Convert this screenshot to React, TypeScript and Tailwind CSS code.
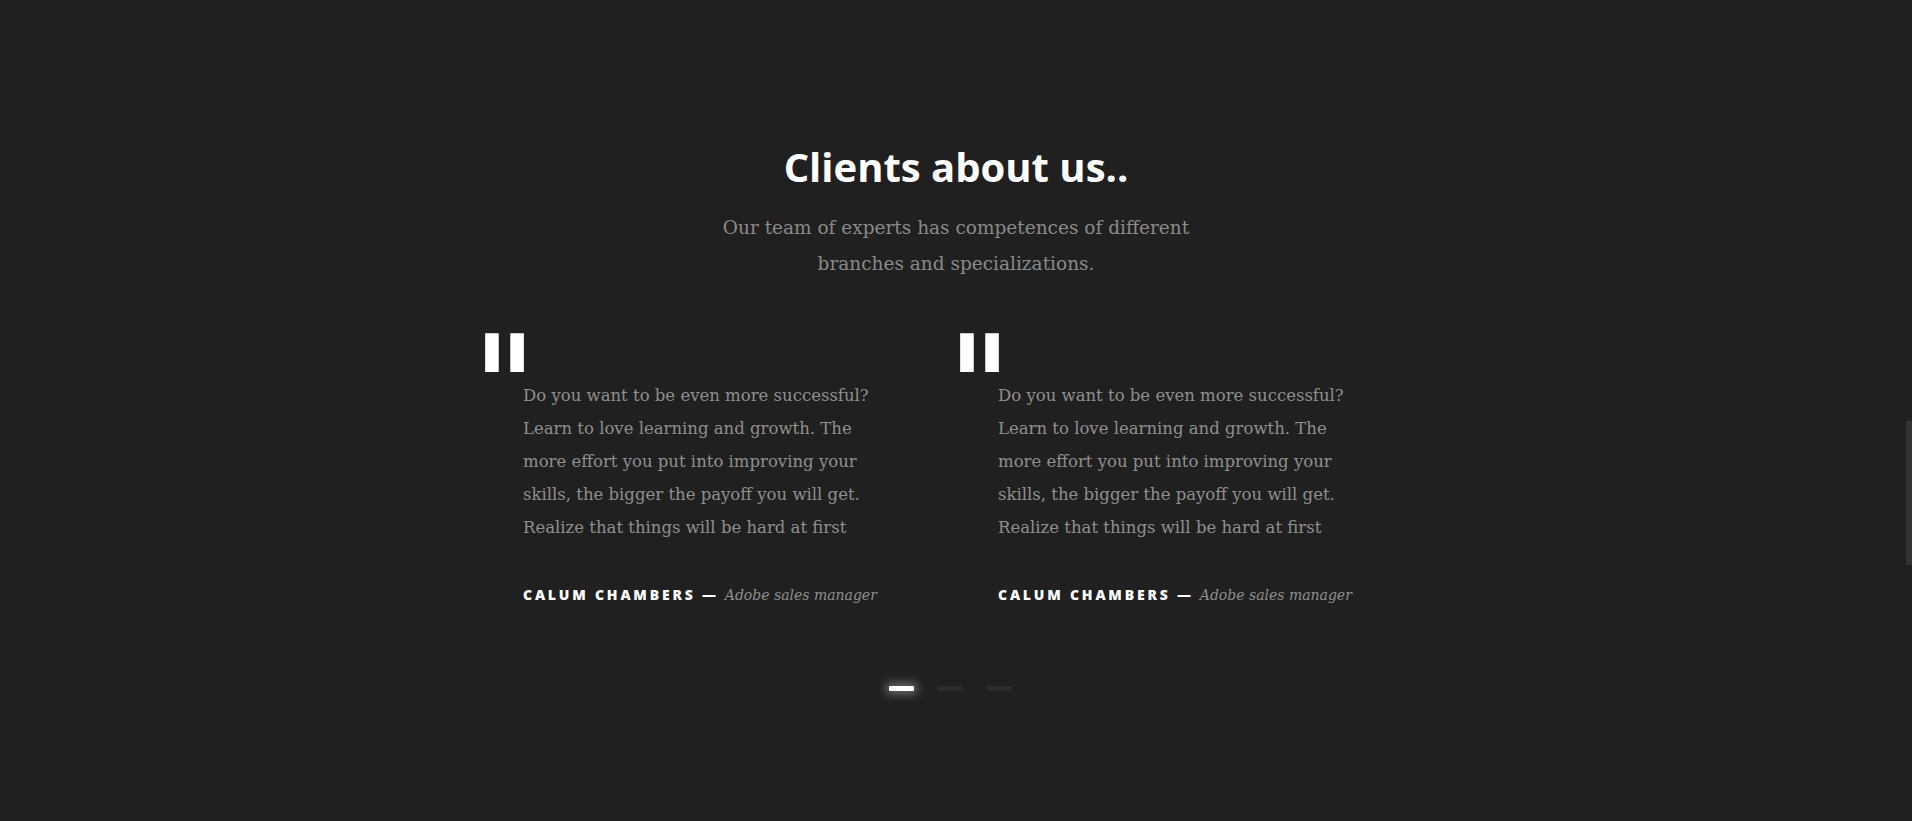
import React from "react";

const lines = [
  "Do you want to be even more successful?",
  "Learn to love learning and growth. The",
  "more effort you put into improving your",
  "skills, the bigger the payoff you will get.",
  "Realize that things will be hard at first",
];

function Testimonial() {
  return (
    <div className="flex flex-col">
      <div className="h-[47px]">
        <div className="-mt-[16px] -ml-[7px] origin-top scale-y-110 font-['DejaVu_Sans_Condensed',sans-serif] font-bold text-[130px] leading-none text-white select-none">
          "
        </div>
      </div>
      <p className="pl-[42px] text-[16.5px] leading-[33px] text-[#8f8f8f] font-['DejaVu_Serif',serif]">
        {lines.map((l, i) => (
          <React.Fragment key={i}>
            {l}
            {i < lines.length - 1 && <br />}
          </React.Fragment>
        ))}
      </p>
      <div className="pl-[42px] mt-[40px] flex items-baseline gap-[6px] whitespace-nowrap">
        <span className="font-['Open_Sans',sans-serif] font-extrabold text-[14px] tracking-[0.2em] text-white uppercase">
          Calum Chambers —
        </span>
        <span className="font-['DejaVu_Serif',serif] italic text-[14px] text-[#8f8f8f]">
          Adobe sales manager
        </span>
      </div>
    </div>
  );
}

export default function App() {
  return (
    <div className="relative min-h-[821px] w-full bg-[#202020] overflow-hidden">
      <section className="pt-[143px] flex flex-col items-center">
        <h2 className="font-['Open_Sans',sans-serif] font-bold text-[40px] leading-[48px] text-white">
          Clients about us..
        </h2>
        <p className="mt-[19px] text-center text-[18.5px] leading-[36px] text-[#8a8a8a] font-['DejaVu_Serif',serif]">
          Our team of experts has competences of different
          <br />
          branches and specializations.
        </p>
        <div className="mt-[50px] w-[950px] grid grid-cols-2">
          <Testimonial />
          <Testimonial />
        </div>
        <div className="mt-[80px] mr-[11px] flex items-center gap-[24px]">
          <span className="block w-[25px] h-[5px] rounded-[1px] bg-white shadow-[0_0_10px_3px_rgba(255,255,255,0.35)]" />
          <span className="block w-[25px] h-[5px] rounded-[1px] bg-[#2b2b2b]" />
          <span className="block w-[25px] h-[5px] rounded-[1px] bg-[#2b2b2b]" />
        </div>
      </section>
      <div className="absolute right-0 top-[421px] w-[6px] h-[144px] bg-[#333333]" />
    </div>
  );
}
